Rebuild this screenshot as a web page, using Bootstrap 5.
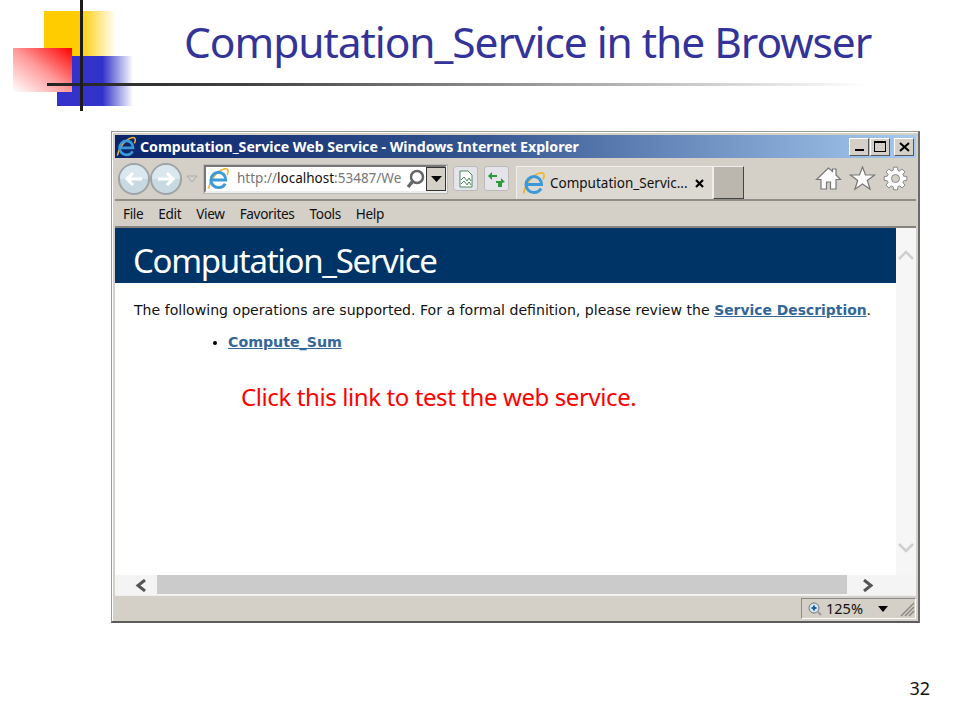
<!DOCTYPE html>
<html lang="en">
<head>
<meta charset="utf-8">
<title>Computation_Service in the Browser</title>
<link href="https://cdn.jsdelivr.net/npm/bootstrap@5.3.0/dist/css/bootstrap.min.css" rel="stylesheet">
<style>
html,body{margin:0;background:#fff}
.slide{width:960px;height:720px;position:relative;overflow:hidden;font-family:"Noto Sans","Liberation Sans",sans-serif;color:#000}
.deco{position:absolute;left:0;top:0}
.slide-head{height:131px;padding-left:184px;position:relative}
.slide-title{font-family:"Noto Sans",sans-serif;font-size:42.5px;letter-spacing:-1.06px;line-height:1;color:#333399;margin:0;padding-top:21px;font-weight:400;white-space:nowrap}
.ie-win{margin-left:111px;width:809px;height:492px;background:#d4d0c8;border:1px solid #9a9a9a;border-right:2px solid #6b6b6b;border-bottom:2px solid #5c5c5c;padding:3px 2px 0 3px;box-shadow:inset 1px 1px 0 #fff}
.ie-title{height:23px;background:linear-gradient(90deg,#0a246a 0,#33548f 45%,#a6caf0 100%);padding:0 2px 0 1px;color:#fff;font-family:"Noto Sans",sans-serif;font-weight:700;font-size:14.2px;letter-spacing:-.03px;white-space:nowrap}
.ie-logo-cap{margin-right:3px}
.capbtn{width:20px;height:18px;background:#d4d0c8;border:1px solid;border-color:#fff #555 #555 #fff;margin-left:1px}
.ie-tools{height:43px;border-bottom:2px solid #8f8c85;padding:0 8px 0 3px}
.addr{width:243px;height:28px;margin-left:6px;background:#fff;border:2px solid;border-color:#777 #eee #eee #777;box-shadow:0 0 0 1px #bbb;font-family:"Noto Sans",sans-serif;font-size:13.5px;color:#777;white-space:nowrap;padding-left:1px}
.addr b{font-weight:400;color:#111}
.addr-logo{margin-right:7px}
.addr-text{width:163px}
.addr-search{margin-left:4px}
.addr-drop{width:20px;height:24px;background:#d4d0c8;border:1px solid #333;flex:none;margin-left:auto}
.tbtn{width:25px;height:25px;background:#e4e4ea;border:1px solid #bbb;border-radius:3px;margin-left:6px}
.ie-tab{width:197px;height:33px;margin-left:7px;align-self:flex-end;background:#dcd9d2;border:1px solid #f0eee9;border-bottom:0;font-size:13.5px;padding:0 8px 0 5px;white-space:nowrap;color:#111}
.ie-tab-logo{margin-right:4px}
.newtab{width:31px;height:33px;align-self:flex-end;background:#bbb7ae;border:1px solid;border-color:#eee #444 #444 #eee}
.ie-actions{gap:7px}
.ie-menu{height:27px;border-bottom:2px solid #86847d;padding:1px 0 0 8px;gap:15px;font-size:13.6px;letter-spacing:-.35px;color:#111}
.ie-pagewrap{height:347px}
.ie-page{width:781px;background:#fff;font-family:"DejaVu Sans",sans-serif}
.ie-banner{height:55px;background:#003366;color:#fff;font-family:"Noto Sans",sans-serif;font-size:33px;letter-spacing:-1.3px;padding-left:18px;line-height:66px;overflow:hidden}
.ie-intro{font-size:14.1px;margin:18px 0 0 19px;line-height:18px;color:#111;white-space:nowrap}
.ie-intro .ie-link{font-size:13.9px}
.ie-link{color:#336699;font-weight:700;text-decoration:underline}
.ie-ops{margin:14px 0 0 96px;padding-left:17px;font-size:14.2px;line-height:18px}
.ie-hint{color:#f00;font-family:"Noto Sans",sans-serif;font-size:24px;letter-spacing:-.4px;margin:31px 0 0 126px;line-height:30px;white-space:nowrap}
.vbar{width:20px;background:#f6f6f6;padding:22px 0 22px}
.hbar{height:20px;background:#f4f4f4}
.harrow{width:42px;padding-left:20px}
.hthumb{flex:1;background:#cbcbcb;height:19px}
.harrow-r{width:69px;padding-left:15px}
.ie-status{height:26px;border-top:1px solid #f2f0ec}
.zoombox{width:115px;height:21px;margin-top:2px;border:1px solid;border-color:#8a8a8a #fff #fff #8a8a8a;font-size:14.5px;color:#111;padding-left:6px;white-space:nowrap}
.zoom-caret{margin-left:15px}
.pageno{position:absolute;right:30px;top:677px;font-size:18px;line-height:22px;color:#111}
</style>
</head>
<body>
<svg width="0" height="0" class="position-absolute">
<defs>
<symbol id="ie-logo" viewBox="0 0 24 24">
<path d="M1.500 22.500C3 14 10 4 18 2c4.500-1 5 2.500 3 6.500" fill="none" stroke="#f0b530" stroke-width="1.700"/>
<path d="M5 13.500h14.500c0-4.800-3.500-8-7.500-8s-8 3.500-8 8 3.500 8 8 8c3 0 5.500-1.300 7-4" fill="none" stroke="#3a9ad9" stroke-width="3"/>
</symbol>
<symbol id="nav-circle" viewBox="0 0 32 32">
<circle cx="16" cy="16" r="15" fill="#c9d9e2" stroke="#9ea3a6" stroke-width="2"/>
<path d="M2 16a14 14 0 0 1 28 0z" fill="#dbe7ee"/>
</symbol>
</defs>
</svg>
<div class="slide">
  <svg class="deco" width="960" height="112" viewBox="0 0 960 112" aria-hidden="true">
    <defs>
      <linearGradient id="gy" x1="0" x2="1" y1="0" y2="0"><stop offset="0" stop-color="#ffcc00"/><stop offset=".5" stop-color="#ffcc00"/><stop offset="1" stop-color="#ffcc00" stop-opacity="0"/></linearGradient>
      <linearGradient id="gb" x1="0" x2="1" y1="0" y2="0"><stop offset="0" stop-color="#3333cc"/><stop offset=".6" stop-color="#3333cc"/><stop offset="1" stop-color="#3333cc" stop-opacity="0"/></linearGradient>
      <linearGradient id="gr" x1="1" x2="0" y1="0" y2="1"><stop offset="0" stop-color="#ff0000"/><stop offset=".5" stop-color="#ff0000" stop-opacity=".4"/><stop offset="1" stop-color="#ff0000" stop-opacity="0"/></linearGradient>
      <linearGradient id="gl" x1="0" x2="1" y1="0" y2="0"><stop offset="0" stop-color="#222"/><stop offset=".25" stop-color="#444"/><stop offset="1" stop-color="#444" stop-opacity="0"/></linearGradient>
    </defs>
    <rect x="44" y="11" width="72" height="45" fill="url(#gy)"/>
    <rect x="57" y="56" width="76" height="50" fill="url(#gb)"/>
    <rect x="13" y="48" width="59" height="44" fill="#fff"/>
    <rect x="13" y="48" width="59" height="44" fill="url(#gr)"/>
    <rect x="47" y="83" width="820" height="3" fill="url(#gl)"/>
    <rect x="80" y="0" width="3" height="111" fill="#1c1c1c"/>
  </svg>
  <header class="slide-head">
    <h1 class="slide-title">Computation_Service in the Browser</h1>
  </header>
  <div class="ie-win d-flex flex-column">
    <div class="ie-title d-flex align-items-center">
      <svg width="21" height="21" class="flex-shrink-0 ie-logo-cap"><use href="#ie-logo"/></svg>
      <span>Computation_Service Web Service - Windows Internet Explorer</span>
      <div class="ms-auto d-flex">
        <div class="capbtn d-flex align-items-end justify-content-center pb-1"><svg width="9" height="3"><rect width="9" height="2" y="1" fill="#000"/></svg></div>
        <div class="capbtn d-flex align-items-center justify-content-center"><svg width="12" height="11"><rect x=".5" y=".5" width="11" height="10" fill="none" stroke="#000"/><rect width="12" height="2" fill="#000"/></svg></div>
        <div class="capbtn d-flex align-items-center justify-content-center ms-1"><svg width="11" height="10"><path d="M1 1l9 8M10 1L1 9" stroke="#000" stroke-width="2"/></svg></div>
      </div>
    </div>
    <div class="ie-tools d-flex align-items-center">
      <svg width="32" height="32" class="flex-shrink-0"><use href="#nav-circle"/><path d="M24 16H9m6-6-6 6 6 6" fill="none" stroke="#fff" stroke-width="3"/></svg>
      <svg width="32" height="32" class="flex-shrink-0"><use href="#nav-circle"/><path d="M8 16h15m-6-6 6 6-6 6" fill="none" stroke="#fff" stroke-width="3"/></svg>
      <svg width="12" height="8" class="flex-shrink-0 ms-1"><path d="M1 1h10L6 7z" fill="none" stroke="#aaa"/></svg>
      <div class="addr d-flex align-items-center">
        <svg width="23" height="23" class="flex-shrink-0 addr-logo"><use href="#ie-logo"/></svg>
        <span class="flex-shrink-0 addr-text">http://<b>localhost</b>:53487/We</span>
        <svg width="22" height="22" class="flex-shrink-0 addr-search"><circle cx="13" cy="9" r="6" fill="none" stroke="#666" stroke-width="2.500"/><path d="M9 13l-5 6" stroke="#666" stroke-width="3.500"/></svg>
        <div class="addr-drop d-flex align-items-center justify-content-center"><svg width="11" height="6"><path d="M0 0h11L5.500 6z" fill="#000"/></svg></div>
      </div>
      <div class="tbtn d-flex align-items-center justify-content-center"><svg width="16" height="18"><path d="M2 1h8l4 4v12H2z" fill="#fff" stroke="#4a8a5a"/><path d="M3 10l3-3 3 4 2-3 2 3M3 14l3-3 3 4 2-3 2 3" fill="none" stroke="#4a8a5a"/></svg></div>
      <div class="tbtn d-flex align-items-center justify-content-center"><svg width="19" height="18"><path d="M10 5H5V2L1 6l4 4V7h5z" fill="#2a9a3a"/><path d="M9 11h5V8l4 4-3 1v4h-4v-4H9z" fill="#2a9a3a"/></svg></div>
      <div class="ie-tab d-flex align-items-center">
        <svg width="24" height="24" class="flex-shrink-0 ie-tab-logo"><use href="#ie-logo"/></svg>
        <span>Computation_Servic...</span>
        <svg width="9" height="9" class="ms-auto flex-shrink-0"><path d="M1 1l7 7M8 1L1 8" stroke="#000" stroke-width="2.200"/></svg>
      </div>
      <div class="newtab"></div>
      <div class="ms-auto d-flex align-items-center ie-actions">
        <svg width="27" height="25"><path d="M13.500 2 1.500 13.500h4.500v9.500h5.500v-7h4v7h5.500v-9.500h4.500l-4.500-4.500V3h-3.500v2.500z" fill="#fff" stroke="#777" stroke-width="1.200"/></svg>
        <svg width="27" height="25"><path d="M13.500 1 16.500 9H25.500l-7.200 5.400 2.800 8.800-7.600-5.300-7.600 5.300 2.800-8.800L1.500 9h9z" fill="#fff" stroke="#777" stroke-width="1.200"/></svg>
        <svg width="25" height="25" viewBox="0 0 25 25"><polygon points="23.83,14.5 20.67,14.85 19.94,16.62 21.92,19.1 19.1,21.92 16.62,19.94 14.85,20.67 14.5,23.83 10.5,23.83 10.15,20.67 8.38,19.94 5.9,21.92 3.08,19.1 5.06,16.62 4.33,14.85 1.17,14.5 1.17,10.5 4.33,10.15 5.06,8.38 3.08,5.9 5.9,3.08 8.38,5.06 10.15,4.33 10.5,1.17 14.5,1.17 14.85,4.33 16.62,5.06 19.1,3.08 21.92,5.9 19.94,8.38 20.67,10.15 23.83,10.5" fill="#fff" stroke="#888"/><circle cx="12.500" cy="12.500" r="4" fill="#d4d0c8" stroke="#888"/></svg>
      </div>
    </div>
    <nav class="ie-menu d-flex align-items-center">
      <span>File</span><span>Edit</span><span>View</span><span>Favorites</span><span>Tools</span><span>Help</span>
    </nav>
    <div class="ie-pagewrap d-flex">
      <main class="ie-page">
        <div class="ie-banner">Computation_Service</div>
        <p class="ie-intro">The following operations are supported. For a formal definition, please review the <span class="ie-link">Service Description</span>.</p>
        <ul class="ie-ops mb-0"><li><span class="ie-link">Compute_Sum</span></li></ul>
        <p class="ie-hint">Click this link to test the web service.</p>
      </main>
      <div class="vbar d-flex flex-column justify-content-between align-items-center">
        <svg width="16" height="10"><path d="M1 9l7-7 7 7" fill="none" stroke="#cfcfcf" stroke-width="2.500"/></svg>
        <svg width="16" height="10"><path d="M1 1l7 7 7-7" fill="none" stroke="#cfcfcf" stroke-width="2.500"/></svg>
      </div>
    </div>
    <div class="hbar d-flex">
      <div class="harrow d-flex align-items-center"><svg width="12" height="13"><path d="M10 1 3 6.500l7 5.500" fill="none" stroke="#555" stroke-width="3"/></svg></div>
      <div class="hthumb"></div>
      <div class="harrow-r d-flex align-items-center"><svg width="12" height="13"><path d="M2 1l7 5.500L2 12" fill="none" stroke="#555" stroke-width="3"/></svg></div>
    </div>
    <div class="ie-status d-flex justify-content-end">
      <div class="zoombox d-flex align-items-center">
        <svg width="14" height="14" class="flex-shrink-0 me-1"><circle cx="6" cy="6" r="5" fill="#d5e6f5" stroke="#777"/><path d="M3.500 6h5M6 3.500v5" stroke="#1a5fa8" stroke-width="2"/><path d="M10 10l3 3" stroke="#999" stroke-width="2"/></svg>
        <span>125%</span>
        <svg width="10" height="6" class="zoom-caret flex-shrink-0"><path d="M0 0h10L5 6z" fill="#000"/></svg>
        <svg width="16" height="16" class="ms-auto flex-shrink-0"><path d="M15 2 2 15M15 6 6 15M15 10 10 15" stroke="#8c8a84" stroke-width="1.500"/></svg>
      </div>
    </div>
  </div>
  <div class="pageno">32</div>
</div>
</body>
</html>
